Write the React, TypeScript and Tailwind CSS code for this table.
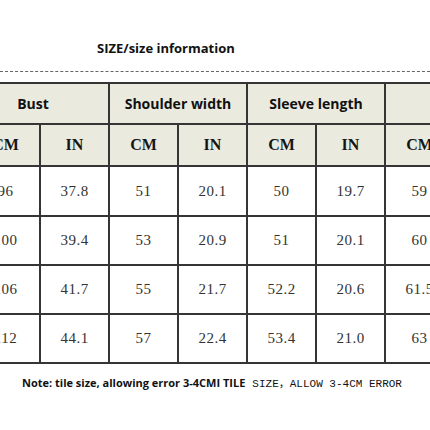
const sizes = [
  ['96', '37.8', '51', '20.1', '50', '19.7', '59'],
  ['100', '39.4', '53', '20.9', '51', '20.1', '60'],
  ['106', '41.7', '55', '21.7', '52.2', '20.6', '61.5'],
  ['112', '44.1', '57', '22.4', '53.4', '21.0', '63'],
];

const rowHeights = ['h-[48px]', 'h-[47px]', 'h-[47px]', 'h-[47px]'];

const sans = "font-['Open_Sans','Liberation_Sans',sans-serif]";
const serif = "font-['Liberation_Serif','Noto_Sans_CJK_SC',serif]";
const mono = "font-['Liberation_Mono','Noto_Sans_CJK_SC',monospace]";

const App = () => {
  return (
    <div className="w-[430px] h-[430px] bg-white overflow-hidden">
      {/* Title */}
      <div className="pt-[40px] pl-[97px]">
        <div className={`${sans} font-bold text-[13px] leading-[16px] text-[#111]`}>SIZE/size information</div>
      </div>
      <div className="mt-[15px] border-t border-dashed border-[#666]"></div>

      {/* Size table */}
      <div className="mt-[10px] ml-[-30px] w-max grid grid-cols-[67px_67px_67px_67px_67px_67px_67px_76px] gap-[2px] p-[2px] bg-[#353535]">
        <div className={`col-span-2 h-[39px] bg-[#ebeadf] flex items-center justify-center pr-[14px] ${sans} font-bold text-[14px] text-[#111]`}>Bust</div>
        <div className={`col-span-2 h-[39px] bg-[#ebeadf] flex items-center justify-center ${sans} font-bold text-[14px] text-[#111]`}>Shoulder width</div>
        <div className={`col-span-2 h-[39px] bg-[#ebeadf] flex items-center justify-center ${sans} font-bold text-[14px] text-[#111]`}>Sleeve length</div>
        <div className="col-span-2 h-[39px] bg-[#ebeadf]"></div>

        {['CM', 'IN', 'CM', 'IN', 'CM', 'IN', 'CM', 'IN'].map((unit, i) => (
          <div key={i} className={`h-[40px] bg-[#ebeadf] flex items-center justify-center ${serif} font-bold text-[16px] text-[#151515]`}>
            {unit}
          </div>
        ))}

        {sizes.map((row, r) => (
          <>
            {row.map((val, c) => (
              <div key={`${r}-${c}`} className={`${rowHeights[r]} bg-white flex items-center justify-center ${serif} text-[15px] tracking-[0.5px] text-[#333]`}>
                {val}
              </div>
            ))}
            <div key={`${r}-x`} className={`${rowHeights[r]} bg-white`}></div>
          </>
        ))}
      </div>

      {/* Note */}
      <div className="mt-[11px] pl-[22px] flex items-baseline gap-[7px] whitespace-nowrap">
        <span className={`${sans} font-bold text-[11px] text-[#111]`}>Note: tile size, allowing error 3-4CMI TILE</span>
        <span className={`${mono} text-[11px] text-[#111]`}>SIZE，ALLOW 3-4CM ERROR</span>
      </div>
    </div>
  );
};

export default App;
